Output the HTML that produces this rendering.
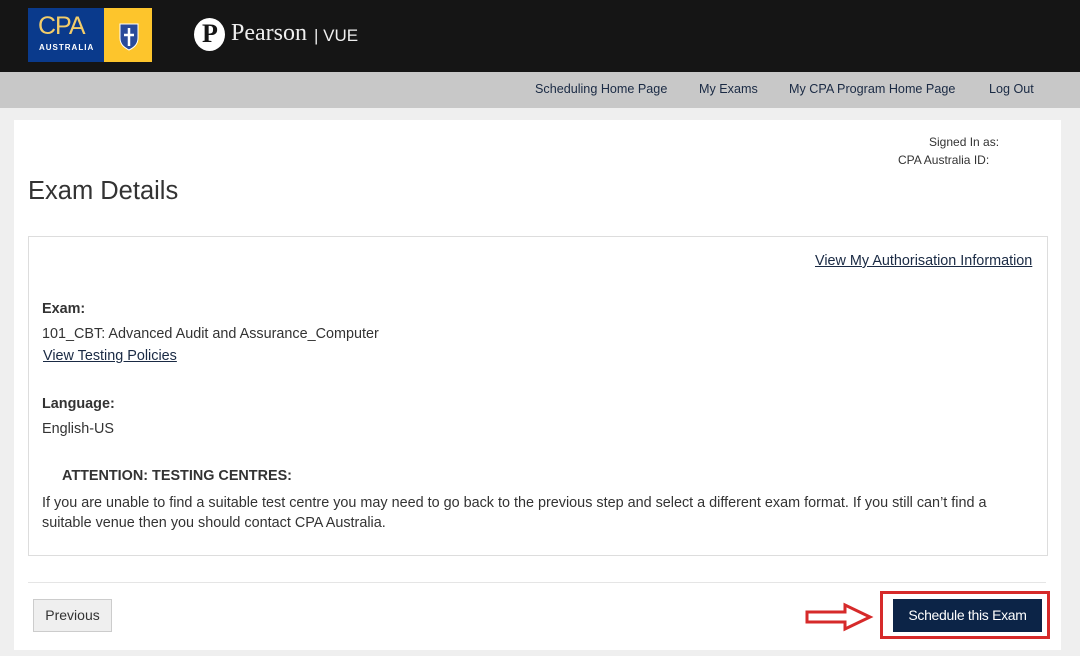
<!DOCTYPE html>
<html><head><style>
body{margin:0;width:1080px;height:656px;background:#efefef;font-family:"Liberation Sans",Arial,sans-serif;position:relative;overflow:hidden;color:#333}
.a{position:absolute}
a{color:#1a2a44;text-decoration:underline}
.t{font-size:14.4px}
</style></head><body>
<div class="a" style="left:0;top:0;width:1080px;height:72px;background:#151515"></div>
<div class="a" style="left:28px;top:8px;width:76px;height:54px;background:#0a3a8c"></div>
<div class="a" style="left:104px;top:8px;width:48px;height:54px;background:#fdc52c"></div>
<div class="a" style="left:38px;top:12px;font-size:25px;color:#f3cd6a;letter-spacing:-1px">CPA</div>
<div class="a" style="left:39px;top:43px;font-size:8px;font-weight:bold;color:#fff;letter-spacing:1px">AUSTRALIA</div>
<svg class="a" style="left:117px;top:18px" width="24" height="34"><path d="M3 6h18v14c0 7-5 10-9 12c-4-2-9-5-9-12z" fill="#2a4a9a" stroke="#fff" stroke-width="1"/><path d="M12 10v18M7 17h10" stroke="#fff" stroke-width="2.5"/></svg>
<div class="a" style="left:194px;top:18px;width:31px;height:33px;border-radius:50%;background:#fff"></div>
<div class="a" style="left:202px;top:19px;font-size:26px;font-weight:bold;color:#151515;font-family:'Liberation Serif',serif">P</div>
<div class="a" style="left:231px;top:20px;font-size:24px;color:#eee;font-family:'Liberation Serif',serif">Pearson</div>
<div class="a" style="left:314px;top:26px;font-size:17px;color:#eee">| VUE</div>
<div class="a" style="left:0;top:72px;width:1080px;height:36px;background:#c8c8c8"></div>
<div class="a" style="top:82px;font-size:12.6px;color:#1a2a44;left:535px">Scheduling Home Page</div>
<div class="a" style="top:82px;font-size:12.6px;color:#1a2a44;left:699px">My Exams</div>
<div class="a" style="top:82px;font-size:12.6px;color:#1a2a44;left:789px">My CPA Program Home Page</div>
<div class="a" style="top:82px;font-size:12.6px;color:#1a2a44;left:989px">Log Out</div>
<div class="a" style="left:14px;top:120px;width:1047px;height:530px;background:#fff"></div>
<div class="a" style="left:929px;top:135px;font-size:12px">Signed In as:</div>
<div class="a" style="left:898px;top:153px;font-size:12px">CPA Australia ID:</div>
<div class="a" style="left:28px;top:177px;font-size:25.5px">Exam Details</div>
<div class="a" style="left:28px;top:236px;width:1018px;height:318px;border:1px solid #ddd"></div>
<div class="a t" style="left:815px;top:253px"><a>View My Authorisation Information</a></div>
<div class="a t" style="left:42px;top:301px;font-weight:bold">Exam:</div>
<div class="a t" style="left:42px;top:326px">101_CBT: Advanced Audit and Assurance_Computer</div>
<div class="a t" style="left:43px;top:348px"><a>View Testing Policies</a></div>
<div class="a t" style="left:42px;top:396px;font-weight:bold">Language:</div>
<div class="a t" style="left:42px;top:421px">English-US</div>
<div class="a t" style="left:62px;top:468px;font-weight:bold">ATTENTION: TESTING CENTRES:</div>
<div class="a t" style="left:42px;top:493px;width:970px;line-height:20px">If you are unable to find a suitable test centre you may need to go back to the previous step and select a different exam format. If you still can’t find a suitable venue then you should contact CPA Australia.</div>
<div class="a" style="left:28px;top:582px;width:1018px;height:1px;background:#e5e5e5"></div>
<div class="a" style="left:33px;top:599px;width:77px;height:31px;background:#efefef;border:1px solid #ccc;font-size:14px;line-height:31px;text-align:center">Previous</div>
<div class="a" style="left:880px;top:591px;width:170px;height:48px;border:3px solid #d62a2a;box-sizing:border-box"></div>
<div class="a" style="left:893px;top:599px;width:149px;height:33px;background:#0c2447;color:#fff;font-size:14px;line-height:33px;text-align:center;letter-spacing:-0.3px">Schedule this Exam</div>
<svg class="a" style="left:804px;top:602px" width="70" height="30"><path d="M3 10h38v-7l25 12l-25 12v-7h-38z" fill="#fff" stroke="#d62a2a" stroke-width="3"/></svg>
</body></html>
